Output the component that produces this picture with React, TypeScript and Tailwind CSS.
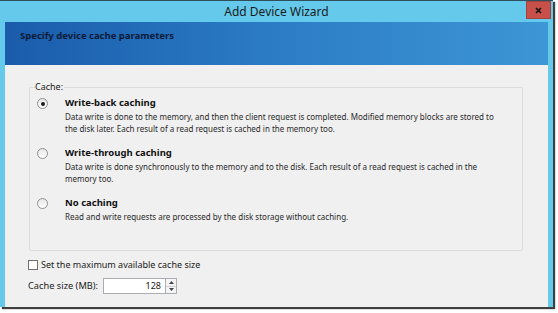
import React from 'react';

const font = { fontFamily: '"Noto Sans", "Open Sans", sans-serif' };

function Radio({ checked }: { checked?: boolean }) {
  return (
    <div className="w-[11px] h-[11px] rounded-full border border-[#8e8f8f] bg-gradient-to-b from-[#e6e6e6] to-white flex items-center justify-center shrink-0 mt-[1px]">
      {checked && <div className="w-[4px] h-[4px] rounded-full bg-[#1c1c1c]" />}
    </div>
  );
}

function Option({ checked, title, lines }: { checked?: boolean; title: string; lines: string[] }) {
  return (
    <div className="flex h-[50px] pl-[7px]">
      <Radio checked={checked} />
      <div className="ml-[17px] flex flex-col">
        <div className="h-[12px] leading-[12px] text-[9.5px] font-bold text-[#111]">{title}</div>
        <div className="mt-[2px] text-[8px] leading-[12px] text-[#2a2a2a]">
          {lines.map((l) => (
            <div key={l} className="whitespace-nowrap">{l}</div>
          ))}
        </div>
      </div>
    </div>
  );
}

export default function App() {
  return (
    <div className="w-[558px] h-[313px] bg-white overflow-hidden" style={font}>
      <div className="w-[553px] h-[307px] bg-[#64c9ea] border-t border-[#2f4f5c] flex flex-col shadow-[2px_2px_1px_rgba(0,0,0,0.75)]">
        {/* title bar */}
        <div className="relative h-[21px] flex items-center justify-center">
          <span className="text-[12px] text-[#1b1b1b]">Add Device Wizard</span>
          <button className="absolute right-[2px] top-0 w-[25px] h-[18px] bg-[#c7504a] border border-[#a8423d] flex items-center justify-center">
            <svg width="7" height="7" viewBox="0 0 7 7">
              <path d="M1 1 L6 6 M6 1 L1 6" stroke="#111" strokeWidth="1.6" />
            </svg>
          </button>
        </div>
        <div className="flex-1 flex flex-col px-[5px]">
          {/* header band */}
          <div className="h-[43px] bg-gradient-to-r from-[#1a5cab] via-[#2c7cc5] to-[#3d96d5] flex items-start pl-[15px] pt-[7px]">
            <span className="text-[9.5px] font-bold text-[#0b1a38]">Specify device cache parameters</span>
          </div>
          {/* body */}
          <div className="flex-1 bg-[#f0f0f0] pt-[22px] pl-[24px]">
            <div className="relative w-[494px] h-[164px] border border-[#dcdcdc] rounded-[2px] pt-[9px]">
              <span className="absolute -top-[7px] left-[5px] bg-[#f0f0f0] pr-[1px] text-[9px] leading-[12px] text-[#1b1b1b]">Cache:</span>
              <Option
                checked
                title="Write-back caching"
                lines={[
                  'Data write is done to the memory, and then the client request is completed. Modified memory blocks are stored to',
                  'the disk later. Each result of a read request is cached in the memory too.',
                ]}
              />
              <Option
                title="Write-through caching"
                lines={[
                  'Data write is done synchronously to the memory and to the disk. Each result of a read request is cached in the',
                  'memory too.',
                ]}
              />
              <Option
                title="No caching"
                lines={['Read and write requests are processed by the disk storage without caching.']}
              />
            </div>
            <div className="-ml-px mt-[8px] flex items-center h-[12px]">
              <div className="w-[10px] h-[10px] border border-[#707070] bg-white" />
              <span className="ml-[3px] text-[9px] leading-[12px] text-[#1b1b1b]">Set the maximum available cache size</span>
            </div>
            <div className="-ml-px mt-[7px] flex items-center h-[16px]">
              <span className="text-[9.25px] text-[#1b1b1b]">Cache size (MB):</span>
              <div className="ml-[5px] w-[63px] h-[16px] border border-[#abadb3] bg-white flex items-center justify-end pr-[4px] text-[9px] text-[#1b1b1b]">
                128
              </div>
              <div className="w-[11px] h-[16px] border border-l-0 border-[#abadb3] bg-[#f4f4f4] flex flex-col">
                <div className="flex-1 flex items-center justify-center border-b border-[#d0d0d0]">
                  <svg width="5" height="3" viewBox="0 0 5 3"><path d="M0 3 L2.5 0 L5 3 Z" fill="#444" /></svg>
                </div>
                <div className="flex-1 flex items-center justify-center">
                  <svg width="5" height="3" viewBox="0 0 5 3"><path d="M0 0 L2.5 3 L5 0 Z" fill="#444" /></svg>
                </div>
              </div>
            </div>
          </div>
        </div>
      </div>
    </div>
  );
}
